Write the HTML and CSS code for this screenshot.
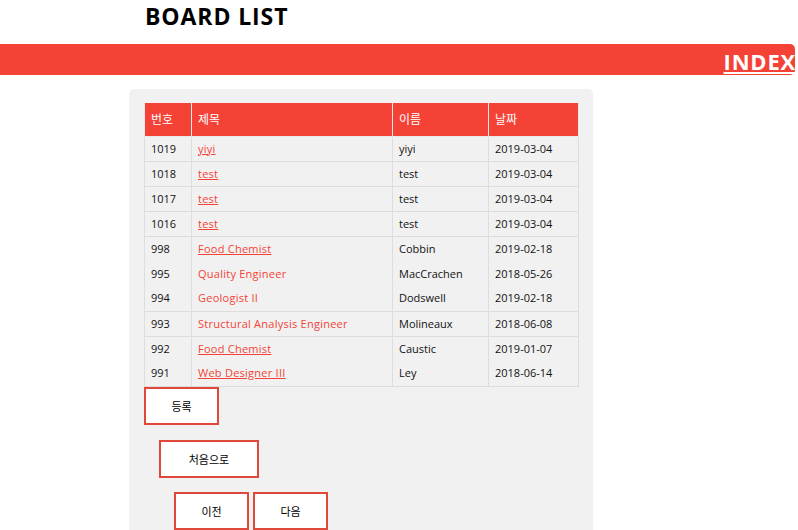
FILE: index.html
```html
<!DOCTYPE html>
<html lang="ko">
<head>
<meta charset="utf-8">
<title>BOARD LIST</title>
<link rel="stylesheet" href="styles.css">
</head>
<body>
<h1 class="title">BOARD LIST</h1>
<div class="bar"><a class="index" href="#">INDEX</a></div>
<div class="panel">
  <table class="board">
    <thead>
      <tr><th class="c-no">번호</th><th class="c-title">제목</th><th class="c-name">이름</th><th class="c-date">날짜</th></tr>
    </thead>
    <tbody>
      <tr class="sep"><td>1019</td><td><a class="u" href="#">yiyi</a></td><td>yiyi</td><td>2019-03-04</td></tr>
      <tr class="sep"><td>1018</td><td><a class="u" href="#">test</a></td><td>test</td><td>2019-03-04</td></tr>
      <tr class="sep"><td>1017</td><td><a class="u" href="#">test</a></td><td>test</td><td>2019-03-04</td></tr>
      <tr class="sep"><td>1016</td><td><a class="u" href="#">test</a></td><td>test</td><td>2019-03-04</td></tr>
      <tr><td>998</td><td><a class="u" href="#">Food Chemist</a></td><td>Cobbin</td><td>2019-02-18</td></tr>
      <tr><td>995</td><td><a href="#">Quality Engineer</a></td><td>MacCrachen</td><td>2018-05-26</td></tr>
      <tr class="sep"><td>994</td><td><a href="#">Geologist II</a></td><td>Dodswell</td><td>2019-02-18</td></tr>
      <tr class="sep"><td>993</td><td><a href="#">Structural Analysis Engineer</a></td><td>Molineaux</td><td>2018-06-08</td></tr>
      <tr><td>992</td><td><a class="u" href="#">Food Chemist</a></td><td>Caustic</td><td>2019-01-07</td></tr>
      <tr class="sep"><td>991</td><td><a class="u" href="#">Web Designer III</a></td><td>Ley</td><td>2018-06-14</td></tr>
    </tbody>
  </table>
  <div class="level">
    <button class="btn">등록</button>
    <div class="level">
      <button class="btn wide">처음으로</button>
      <div class="level pager">
        <button class="btn">이전</button>
        <button class="btn">다음</button>
      </div>
    </div>
  </div>
</div>
</body>
</html>
```

FILE: styles.css
```css
html, body {
  margin: 0;
  padding: 0;
  background: #ffffff;
  font-family: "Open Sans", "Noto Sans CJK KR", sans-serif;
  overflow: hidden;
  height: 530px;
}
.title {
  margin: 0;
  padding: 3px 0 0 145px;
  height: 40px;
  box-sizing: border-box;
  font-family: "Open Sans", "Noto Sans CJK KR", sans-serif;
  font-weight: 700;
  font-size: 23px;
  letter-spacing: 0.9px;
  line-height: 26px;
  color: #000;
}
.bar {
  margin-top: 4px;
  width: 795px;
  height: 31px;
  background: #f44336;
  border-radius: 0 5px 5px 0;
  display: flex;
  justify-content: flex-end;
  align-items: center;
}
.index {
  color: #fff;
  font-weight: 700;
  font-size: 22px;
  letter-spacing: 0.8px;
  margin-right: -1px;
  line-height: 26px;
  padding-top: 2px;
  text-decoration: underline;
  text-decoration-thickness: 2px;
  text-underline-offset: 2px;
}
.panel {
  margin: 14px 0 0 129px;
  width: 464px;
  height: 460px;
  background: #f1f1f1;
  border-radius: 5px;
  padding: 14px 15px 0 15px;
  box-sizing: border-box;
}
.board {
  border-collapse: collapse;
  width: 434px;
  table-layout: fixed;
  font-size: 11px;
}
.board th {
  background: #f44336;
  color: #fff;
  font-weight: 400;
  font-size: 12px;
  text-align: left;
  height: 33px;
  padding: 0 0 0 6px;
  border: 1px solid #e8e8e8;
  border-top: 0;
  box-sizing: border-box;
}
.c-no { width: 47px; }
.c-title { width: 201px; }
.c-name { width: 96px; }
.c-date { width: 90px; }
.board td {
  height: 25px;
  padding: 0 0 1px 6px;
  border-left: 1px solid #dddddd;
  border-right: 1px solid #dddddd;
  color: #111;
  box-sizing: border-box;
  white-space: nowrap;
}
.board tr.sep td {
  border-bottom: 1px solid #dddddd;
}
.board a {
  color: #f44336;
  text-decoration: none;
  letter-spacing: 0.25px;
}
.board a.u {
  text-decoration: underline;
}
.level {
  padding-left: 15px;
  margin-left: -15px;
}
.level .level {
  margin-left: 0;
  padding-top: 15px;
}
.level .level.pager {
  padding-top: 14px;
  display: flex;
  gap: 4px;
}
.btn {
  display: block;
  width: 75px;
  height: 38px;
  background: #fff;
  border: 2px solid #e0483a;
  margin: 0;
  padding: 0;
  font-family: "Noto Sans CJK KR", sans-serif;
  font-size: 11px;
  color: #000;
}
.btn.wide {
  width: 100px;
}
```
